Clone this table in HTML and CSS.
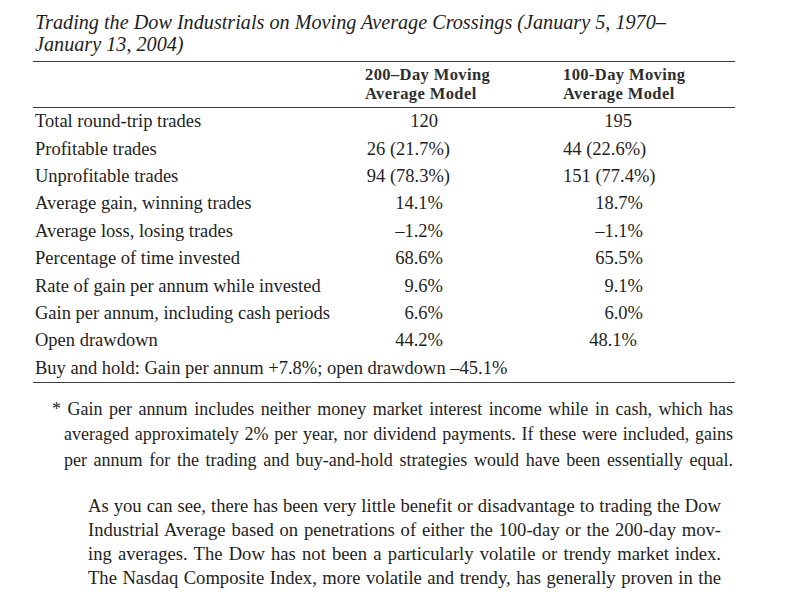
FILE: index.html
```html
<!DOCTYPE html>
<html>
<head>
<meta charset="utf-8">
<link rel="stylesheet" href="styles.css">
</head>
<body>
<div class="page">
  <h1 class="title">Trading the Dow Industrials on Moving Average Crossings (January 5, 1970–<br>January 13, 2004)</h1>
  <div class="table">
    <div class="thead">
      <div></div>
      <div class="th"><div>200–Day Moving</div><div>Average Model</div></div>
      <div class="th"><div>100-Day Moving</div><div>Average Model</div></div>
    </div>
    <div class="row"><div class="lab">Total round-trip trades</div><div class="v1 n">120</div><div class="v2 n">195</div></div>
    <div class="row"><div class="lab">Profitable trades</div><div class="v1 p">26 (21.7%)</div><div class="v2 p">44 (22.6%)</div></div>
    <div class="row"><div class="lab">Unprofitable trades</div><div class="v1 p">94 (78.3%)</div><div class="v2 p">151 (77.4%)</div></div>
    <div class="row"><div class="lab">Average gain, winning trades</div><div class="v1">14.1%</div><div class="v2">18.7%</div></div>
    <div class="row"><div class="lab">Average loss, losing trades</div><div class="v1">–1.2%</div><div class="v2">–1.1%</div></div>
    <div class="row"><div class="lab">Percentage of time invested</div><div class="v1">68.6%</div><div class="v2">65.5%</div></div>
    <div class="row"><div class="lab">Rate of gain per annum while invested</div><div class="v1">9.6%</div><div class="v2">9.1%</div></div>
    <div class="row"><div class="lab">Gain per annum, including cash periods</div><div class="v1">6.6%</div><div class="v2">6.0%</div></div>
    <div class="row"><div class="lab">Open drawdown</div><div class="v1">44.2%</div><div class="v2 o">48.1%</div></div>
    <div class="row last"><div class="lab full">Buy and hold: Gain per annum +7.8%; open drawdown –45.1%</div></div>
  </div>
  <div class="note">
    <span class="ln first">* Gain per annum includes neither money market interest income while in cash, which has</span>
    <span class="ln">averaged approximately 2% per year, nor dividend payments. If these were included, gains</span>
    <span class="ln">per annum for the trading and buy-and-hold strategies would have been essentially equal.</span>
  </div>
  <div class="para">
    <span class="ln">As you can see, there has been very little benefit or disadvantage to trading the Dow</span>
    <span class="ln">Industrial Average based on penetrations of either the 100-day or the 200-day mov-</span>
    <span class="ln">ing averages. The Dow has not been a particularly volatile or trendy market index.</span>
    <span class="ln">The Nasdaq Composite Index, more volatile and trendy, has generally proven in the</span>
  </div>
</div>
</body>
</html>
```

FILE: styles.css
```css
html, body {
  margin: 0;
  padding: 0;
  background: #ffffff;
}
body {
  font-family: "Liberation Serif", "Times New Roman", serif;
  color: #1e1e1e;
}
.page {
  width: 786px;
  height: 595px;
  overflow: hidden;
}
.title {
  margin: 0 0 0 35px;
  padding-top: 11px;
  font-size: 20.2px;
  line-height: 22px;
  font-style: italic;
  font-weight: normal;
  height: 50px;
}
.table {
  margin-left: 33px;
  width: 702px;
  border-top: 1.5px solid #3a3a3a;
  border-bottom: 1.5px solid #3a3a3a;
  font-size: 18.5px;
}
.thead {
  display: grid;
  grid-template-columns: 332px 198px 1fr;
  height: 45px;
  border-bottom: 1.5px solid #3a3a3a;
  align-items: end;
}
.th {
  font-size: 16.5px;
  font-weight: bold;
  line-height: 19px;
  letter-spacing: 0.4px;
  padding-bottom: 4px;
  color: #2e2e2e;
}
.row {
  display: grid;
  grid-template-columns: 332px 198px 1fr;
  height: 27.4px;
  align-items: center;
}
.lab {
  padding-left: 2px;
  white-space: nowrap;
}
.full {
  grid-column: 1 / 4;
}
.v1, .v2 {
  text-align: right;
  white-space: nowrap;
}
.v1 { padding-right: 120px; }
.v1.n { padding-right: 125px; }
.v1.p { padding-right: 113px; }
.v2 { padding-right: 92px; }
.v2.n { padding-right: 103px; }
.v2.p { padding-right: 90px; }
.v2.o { padding-right: 98px; }
.ln {
  display: block;
  text-align: justify;
  text-align-last: justify;
  white-space: nowrap;
}
.note {
  margin-top: 14px;
  margin-left: 64px;
  width: 669px;
  font-size: 18px;
  line-height: 25.5px;
}
.note .first {
  margin-left: -12px;
}
.para {
  margin-top: 21px;
  margin-left: 88px;
  width: 633px;
  font-size: 18.6px;
  line-height: 23.8px;
}
```
